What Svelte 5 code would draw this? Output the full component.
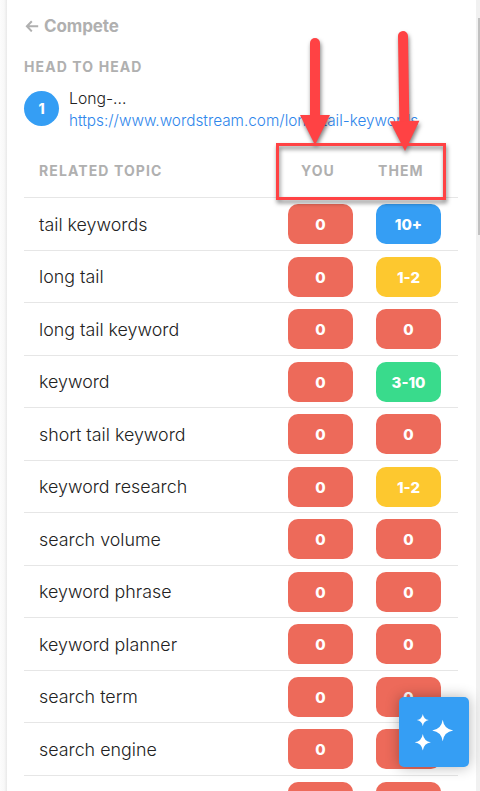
<script>
  const rows = [
    ['tail keywords', '0', '10+'],
    ['long tail', '0', '1-2'],
    ['long tail keyword', '0', '0'],
    ['keyword', '0', '3-10'],
    ['short tail keyword', '0', '0'],
    ['keyword research', '0', '1-2'],
    ['search volume', '0', '0'],
    ['keyword phrase', '0', '0'],
    ['keyword planner', '0', '0'],
    ['search term', '0', '0'],
    ['search engine', '0', '0'],
    ['', '', '']
  ];
  const tones = { '': 'red', '0': 'red', '1-2': 'yellow', '3-10': 'green', '10+': 'blue' };
</script>

<div class="page">
  <div class="gutter"></div>
  <main>
    <div class="back">
      <svg width="14" height="12" viewBox="0 0 14 12"><path d="M13.2 6.3H2M6.8 1.2L1.9 6.3l4.9 5.1" fill="none" stroke="#b0b0b0" stroke-width="2" /></svg>
      <span>Compete</span>
    </div>
    <h2>HEAD TO HEAD</h2>
    <div class="rival">
      <div class="rank">1</div>
      <div class="info">
        <div class="title">Long-...</div>
        <div class="url">https://www.wordstream.com/long-tail-keywords</div>
      </div>
    </div>
    <div class="row head">
      <span class="topic">RELATED TOPIC</span>
      <span class="you">YOU</span>
      <span class="them">THEM</span>
    </div>
    {#each rows as [topic, you, them]}
      <div class="row">
        <span class="topic">{topic}</span>
        <span class="pill {tones[you]}">{you}</span>
        <span class="pill {tones[them]}">{them}</span>
      </div>
    {/each}
  </main>
  <div class="track"><div class="thumb"></div></div>

  <svg class="marks" width="480" height="220" viewBox="0 0 480 220">
    <rect x="277.5" y="144.5" width="167" height="54" fill="none" stroke="#ff4244" stroke-width="3" />
    <g class="arrow">
      <path d="M315 43V118" stroke="#ff4244" stroke-width="10" stroke-linecap="round" />
      <path d="M300 115H330L315 145Z" fill="#ff4244" />
    </g>
    <g class="arrow">
      <path d="M403 36L404.4 124" stroke="#ff4244" stroke-width="10" stroke-linecap="round" />
      <path d="M389.8 121.2L419.4 120.8L405 151Z" fill="#ff4244" />
    </g>
  </svg>

  <div class="fab">
    <svg width="70" height="70" viewBox="0 0 70 70" fill="#fff">
      <path d="M43.7 22.8Q45 32.2 54.2 33.5Q45 34.8 43.7 44.2Q42.4 34.8 33.2 33.5Q42.4 32.2 43.7 22.8Z" />
      <path d="M23.8 17Q24.6 22.3 29.8 23.1Q24.6 23.9 23.8 29.2Q23 23.9 17.8 23.1Q23 22.3 23.8 17Z" />
      <path d="M23.8 37Q24.9 44.3 31.9 45.3Q24.9 46.3 23.8 53.6Q22.7 46.3 15.7 45.3Q22.7 44.3 23.8 37Z" />
    </svg>
  </div>
</div>

<style>
  .page {
    position: relative;
    display: flex;
    width: 480px;
    height: 791px;
    overflow: hidden;
    background: #fff;
    font-family: Inter, 'Liberation Sans', sans-serif;
    color: #222;
  }
  .gutter {
    flex: none;
    width: 7px;
    background: linear-gradient(90deg, #fcfcfc 0, #f8f8f8 60%, #e9e9e9 100%);
  }
  main {
    flex: none;
    box-sizing: border-box;
    width: 469px;
    padding: 14px 18px 0 17px;
  }
  .back {
    display: flex;
    align-items: center;
    gap: 5px;
    height: 24px;
    padding-left: 1px;
    font-size: 17px;
    font-weight: 700;
    letter-spacing: -0.1px;
    color: #b0b0b0;
  }
  h2 {
    margin: 19px 0 0;
    height: 20px;
    line-height: 20px;
    font-size: 14px;
    font-weight: 700;
    letter-spacing: 1.1px;
    color: #b0b0b0;
  }
  .rival {
    display: flex;
    gap: 10px;
    margin-top: 10px;
    height: 58px;
  }
  .rank {
    flex: none;
    width: 35px;
    height: 35px;
    margin-top: 4px;
    border-radius: 50%;
    background: #359ef4;
    color: #fff;
    font-size: 14px;
    font-weight: 800;
    line-height: 35px;
    text-align: center;
  }
  .info {
    font-size: 15.75px;
    font-weight: 300;
    line-height: 23px;
    white-space: nowrap;
  }
  .url {
    color: #2e86eb;
    font-size: 15.33px;
    line-height: 22px;
  }
  .row {
    display: flex;
    align-items: center;
    gap: 23px;
    box-sizing: border-box;
    height: 52.5px;
    padding: 1px 17px 0 15px;
    border-bottom: 1px solid #e6e6e6;
    font-size: 17.85px;
    font-weight: 300;
  }
  .topic {
    flex: 1;
  }
  .head {
    height: 53px;
    padding: 0 17px 1px 15px;
    gap: 0;
    font-size: 14px;
    font-weight: 700;
    letter-spacing: 1.1px;
    color: #b0b0b0;
  }
  .you {
    width: 77px;
  }
  .them {
    width: 63px;
  }
  .pill {
    width: 65px;
    height: 40px;
    border-radius: 10px;
    color: #fff;
    font-size: 15px;
    font-weight: 800;
    line-height: 41px;
    text-align: center;
  }
  .red { background: #ed6a5a; }
  .yellow { background: #fdc82f; }
  .green { background: #39db8c; }
  .blue { background: #359ef4; }
  .track {
    flex: none;
    width: 4px;
    background: #f1f1f1;
  }
  .thumb {
    width: 2px;
    height: 217px;
    margin: 18px 0 0 2px;
    background: #c1c1c1;
  }
  .marks {
    position: absolute;
    left: 0;
    top: 0;
    filter: drop-shadow(1px 3px 2px rgba(0, 0, 0, 0.5));
  }
  .fab {
    position: absolute;
    left: 399px;
    top: 697px;
    width: 70px;
    height: 70px;
    border-radius: 5px;
    background: #359ef4;
    box-shadow: 0 0 14px rgba(0, 0, 0, 0.3);
  }
</style>
